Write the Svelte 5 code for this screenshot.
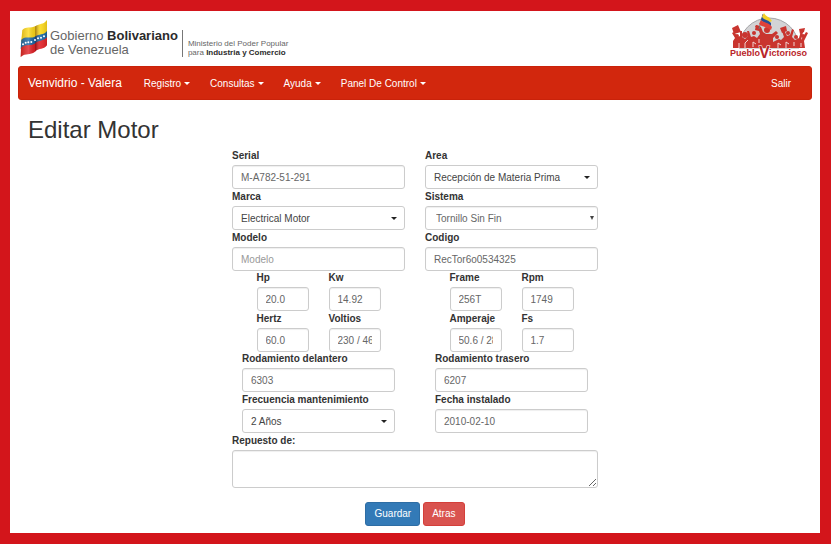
<script>
  const menus = ['Registro', 'Consultas', 'Ayuda', 'Panel De Control'];

  const sides = [
    {
      wide: [
        { id: 'serial', label: 'Serial', value: 'M-A782-51-291' },
        { id: 'marca', label: 'Marca', value: 'Electrical Motor', kind: 'picker' },
        { id: 'modelo', label: 'Modelo', value: '', placeholder: 'Modelo' }
      ],
      small: [
        { id: 'hp', label: 'Hp', value: '20.0' },
        { id: 'kw', label: 'Kw', value: '14.92' },
        { id: 'hertz', label: 'Hertz', value: '60.0' },
        { id: 'voltios', label: 'Voltios', value: '230 / 460' }
      ],
      inset: [
        { id: 'delantero', label: 'Rodamiento delantero', value: '6303' },
        { id: 'frecuencia', label: 'Frecuencia mantenimiento', value: '2 Años', kind: 'picker' }
      ]
    },
    {
      wide: [
        { id: 'area', label: 'Area', value: 'Recepción de Materia Prima', kind: 'picker' },
        { id: 'sistema', label: 'Sistema', value: 'Tornillo Sin Fin', kind: 'native' },
        { id: 'codigo', label: 'Codigo', value: 'RecTor6o0534325' }
      ],
      small: [
        { id: 'frame', label: 'Frame', value: '256T' },
        { id: 'rpm', label: 'Rpm', value: '1749' },
        { id: 'amperaje', label: 'Amperaje', value: '50.6 / 28.3' },
        { id: 'fs', label: 'Fs', value: '1.7' }
      ],
      inset: [
        { id: 'trasero', label: 'Rodamiento trasero', value: '6207' },
        { id: 'fecha', label: 'Fecha instalado', value: '2010-02-10' }
      ]
    }
  ];
</script>

{#snippet field(f)}
  <div class="field">
    <label for={f.id}>{f.label}</label>
    {#if f.kind}
      <div class="select {f.kind}">
        <select id={f.id}><option>{f.value}</option></select>
      </div>
    {:else}
      <input id={f.id} type="text" value={f.value} placeholder={f.placeholder} />
    {/if}
  </div>
{/snippet}

<div class="page">
  <header>
    <div class="gov">
      <svg class="flag" viewBox="6 6 84 120" aria-hidden="true">
        <defs>
          <linearGradient id="shine" x1="0" x2="1" y1="0" y2="0">
            <stop offset="0" stop-color="#630" stop-opacity=".25" />
            <stop offset=".3" stop-color="#fff" stop-opacity=".2" />
            <stop offset=".53" stop-color="#310" stop-opacity=".1" />
            <stop offset=".57" stop-color="#300" stop-opacity=".4" />
            <stop offset=".75" stop-color="#fff" stop-opacity=".1" />
            <stop offset="1" stop-color="#420" stop-opacity=".15" />
          </linearGradient>
        </defs>
        <path fill="#fbd91a" d="M13 39C25 27 38 35 53 27C65 19 76 24 87 9V50C76 62 64 57 50 67C36 75 22 64 9 76Z" />
        <path fill="#1565a8" d="M10 68C24 56 36 66 50 59C64 49 76 56 87 42V64C76 77 64 70 50 83C36 94 22 82 8 96Z" />
        <path fill="#e01f26" d="M9 92C22 79 36 88 50 80C64 68 76 74 87 61V85C76 99 64 92 51 104C36 116 22 106 8 120Z" />
        <path fill="url(#shine)" d="M13 39C25 27 38 35 53 27C65 19 76 24 87 9V85C76 99 64 92 51 104C36 116 22 106 8 120Z" />
        <g fill="#fff">
          <circle cx="15" cy="82" r="3" /><circle cx="23" cy="77" r="3" />
          <circle cx="31" cy="76" r="3" /><circle cx="40" cy="75" r="3" />
          <circle cx="51" cy="69" r="3" /><circle cx="60" cy="64" r="3" />
          <circle cx="69" cy="62" r="3" /><circle cx="78" cy="58" r="3" />
        </g>
      </svg>
      <div class="gov-name">Gobierno <b>Bolivariano</b><br />de Venezuela</div>
      <div class="ministry">Ministerio del Poder Popular<br />para <b>Industria y Comercio</b></div>
    </div>
    <svg class="pueblo" viewBox="0 0 80 48" role="img" aria-label="PuebloVictorioso">
      <path d="M9 35A30 30 0 0 1 69 35Z" fill="#d3d3d5" stroke="#a5a5a8" />
      <g fill="#c9352f">
        <path d="M3 35V28L5 25 2 20 4 19 8 24 10 23 10 18 12 18 12 24 15 26 18 23 17 18 19 18 21 24 24 23 27 25 30 21 28 15 25 14 26 12 31 14 33 19 36 21 42 21 46 18 48 20 43 25 43 29 49 26 51 27 54 24 52 18 54 17 57 23 60 22 62 16 64 17 62 24 65 27 69 25 71 18 73 19 71 27 76 19 78 20 74 28 75 35Z" />
        <path d="M2 15 8 12 11 19 4 21ZM26 12 30 13 29 18 25 17ZM50 15 56 13 57 18 52 20ZM69 16 75 15 74 19 70 21Z" />
        <circle cx="7" cy="23" r="2" /><circle cx="15" cy="22" r="3" />
        <circle cx="24" cy="20" r="2" /><circle cx="37" cy="17" r="3" />
        <circle cx="47" cy="24" r="2" /><circle cx="58" cy="20" r="2" />
        <circle cx="66" cy="24" r="2" /><circle cx="73" cy="23" r="2" />
      </g>
      <path d="M9 35V30M15 35V30L18 27M23 34V29L26 31M29 30V26M48 35V30L51 32M56 35V29L59 31M64 33V29M71 34V30" fill="none" stroke="#f0d4d2" />
      <path d="M29 16 33 1" stroke="#777" />
      <path d="M34 0C36 4 39 3 42 8L40 9C36 7 34 7 32 4Z" fill="#f4d026" />
      <path d="M32 4C34 7 37 6 41 10L41 13C37 10 33 10 31 7Z" fill="#264f96" />
      <path d="M31 7C34 10 38 9 42 14L41 17C37 14 32 14 29 11Z" fill="#e0423a" />
      <g class="pueblo-text">
        <text x="0" y="43">Pueblo</text>
        <text x="39" y="43">ictorioso</text>
        <text class="big" x="29" y="45">V</text>
      </g>
    </svg>
  </header>

  <nav>
    <a class="brand" href="#inicio">Venvidrio - Valera</a>
    {#each menus as m}
      <a class="menu" href="#menu">{m}</a>
    {/each}
    <a class="exit" href="#salir">Salir</a>
  </nav>

  <main>
    <h1>Editar Motor</h1>
    <form onsubmit={(e) => e.preventDefault()}>
      <div class="sides">
        {#each sides as side}
          <div class="side">
            <div class="wide">{#each side.wide as f}{@render field(f)}{/each}</div>
            <div class="small">{#each side.small as f}{@render field(f)}{/each}</div>
            <div class="inset">{#each side.inset as f}{@render field(f)}{/each}</div>
          </div>
        {/each}
      </div>
      <div class="field">
        <label for="repuesto">Repuesto de:</label>
        <textarea id="repuesto"></textarea>
      </div>
      <div class="actions">
        <button class="save" type="submit">Guardar</button>
        <button class="back" type="button">Atras</button>
      </div>
    </form>
  </main>
</div>

<style>
  :global(body) {
    background: #d3151b;
  }
  .page,
  .page * {
    box-sizing: border-box;
  }
  .page {
    margin: 11px 11px 11px 10px;
    padding: 0 8px 7px;
    background: #fff;
    color: #333;
    font: 10px/16px 'Liberation Sans', Arial, sans-serif;
  }
  header {
    display: flex;
    justify-content: space-between;
    height: 55px;
    padding: 2px 2px 0;
  }
  .gov {
    display: flex;
    align-items: flex-start;
    padding-top: 6px;
    color: #666;
    white-space: nowrap;
  }
  .gov b {
    color: #2b2b2b;
  }
  .flag {
    width: 28px;
    height: 40px;
  }
  .gov-name {
    padding: 10px 4px 0 2px;
    font-size: 13px;
    line-height: 14px;
  }
  .ministry {
    margin-top: 11px;
    padding: 9px 0 0 5px;
    border-left: 1px solid #777;
    font-size: 8px;
    line-height: 9px;
  }
  .pueblo {
    width: 80px;
    height: 48px;
  }
  .pueblo-text {
    fill: #b9252a;
    stroke: #fff;
    stroke-width: 1px;
    paint-order: stroke;
    font-size: 9px;
    font-weight: 700;
  }
  .big {
    font-size: 16px;
  }
  nav {
    display: flex;
    align-items: center;
    height: 34px;
    padding: 0 10px 0 0;
    border: 1px solid #c9220a;
    border-radius: 3px;
    background: #d2270d;
  }
  nav a {
    padding: 1px 10px 0;
    color: #fff;
    text-decoration: none;
    white-space: nowrap;
  }
  .brand {
    margin-right: 12px;
    padding: 0 0 0 9px;
    font-size: 12px;
  }
  .menu {
    display: flex;
    align-items: center;
    gap: 3px;
  }
  .menu::after {
    border: 3px solid transparent;
    border-top-color: #fff;
    border-bottom: 0;
    content: '';
  }
  .exit {
    margin-left: auto;
  }
  h1 {
    margin: 0;
    padding: 16px 10px 3px;
    font-size: 24px;
    font-weight: 400;
    line-height: 28px;
  }
  form {
    max-width: 366px;
    margin: 0 auto;
    padding-top: 2px;
  }
  .sides {
    display: grid;
    grid-template-columns: 1fr 1fr;
    gap: 20px;
    margin-bottom: 1px;
  }
  .wide,
  .inset {
    display: grid;
    gap: 1px;
  }
  .inset {
    padding: 0 10px;
  }
  .small {
    display: grid;
    grid-template-columns: 52px 52px;
    justify-content: center;
    gap: 1px 20px;
  }
  .field {
    min-width: 0;
  }
  label {
    display: block;
    height: 16px;
    font-weight: 700;
    line-height: 13px;
    white-space: nowrap;
  }
  input,
  select,
  textarea {
    display: block;
    width: 100%;
    height: 24px;
    margin: 0;
    padding: 0 8px;
    border: 1px solid #ccc;
    border-radius: 3px;
    background: #fff;
    box-shadow: inset 0 1px 1px #0001;
    color: #666;
    font: inherit;
  }
  input::placeholder {
    color: #999;
    opacity: 1;
  }
  select {
    padding-top: 1px;
    appearance: none;
  }
  .picker select {
    box-shadow: none;
    color: #444;
  }
  .native select {
    padding-left: 10px;
  }
  .select {
    position: relative;
  }
  .select::after {
    position: absolute;
    top: 11px;
    right: 8px;
    border: 3px solid transparent;
    border-top-color: #222;
    border-bottom: 0;
    content: '';
    pointer-events: none;
  }
  .native::after {
    top: 10px;
    right: 4px;
    border-width: 4px 2px 0;
    border-top-color: #444;
  }
  textarea {
    height: 38px;
  }
  .actions {
    display: flex;
    justify-content: center;
    gap: 3px;
    padding-top: 14px;
  }
  button {
    height: 24px;
    padding: 0 8px;
    border: 1px solid;
    border-radius: 3px;
    color: #fff;
    font: inherit;
  }
  .save {
    border-color: #2e6da4;
    background: #337ab7;
  }
  .back {
    border-color: #d43f3a;
    background: #d9534f;
  }
</style>
